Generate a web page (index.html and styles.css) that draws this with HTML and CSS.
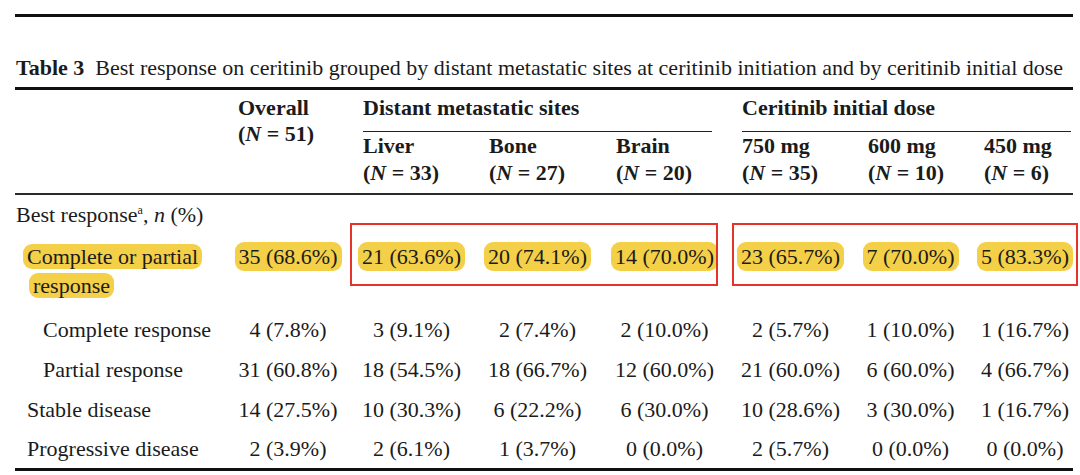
FILE: index.html
```
<!DOCTYPE html>
<html>
<head>
<meta charset="utf-8">
<link rel="stylesheet" href="styles.css">
</head>
<body>
<div class="page">
  <div class="rule thick"></div>
  <p class="caption"><b>Table 3</b>&nbsp; Best response on ceritinib grouped by distant metastatic sites at ceritinib initiation and by ceritinib initial dose</p>
  <div class="rule thick rule-caption"></div>

  <div class="thead">
    <div class="h overall">Overall<br>(<i>N</i> = 51)</div>
    <div class="h group g-sites">Distant metastatic sites</div>
    <div class="h group g-dose">Ceritinib initial dose</div>
    <div class="h sub c3">Liver<br>(<i>N</i> = 33)</div>
    <div class="h sub c4">Bone<br>(<i>N</i> = 27)</div>
    <div class="h sub c5">Brain<br>(<i>N</i> = 20)</div>
    <div class="h sub c6">750 mg<br>(<i>N</i> = 35)</div>
    <div class="h sub c7">600 mg<br>(<i>N</i> = 10)</div>
    <div class="h sub c8">450 mg<br>(<i>N</i> = 6)</div>
  </div>
  <div class="rule thin"></div>

  <div class="tbody">
    <div class="row">
      <div class="label lvl0">Best response<sup>a</sup>, <i>n</i> (%)</div>
    </div>
    <div class="row row-hl">
      <div class="label lvl-hl"><span class="mark">Complete or partial response</span></div>
      <div class="num"><span class="mark">35 (68.6%)</span></div>
      <div class="num"><span class="mark">21 (63.6%)</span></div>
      <div class="num"><span class="mark">20 (74.1%)</span></div>
      <div class="num"><span class="mark">14 (70.0%)</span></div>
      <div class="num"><span class="mark">23 (65.7%)</span></div>
      <div class="num"><span class="mark">7 (70.0%)</span></div>
      <div class="num"><span class="mark">5 (83.3%)</span></div>
      <div class="box box-sites"></div>
      <div class="box box-dose"></div>
    </div>
    <div class="row">
      <div class="label lvl2">Complete response</div>
      <div class="num">4 (7.8%)</div>
      <div class="num">3 (9.1%)</div>
      <div class="num">2 (7.4%)</div>
      <div class="num">2 (10.0%)</div>
      <div class="num">2 (5.7%)</div>
      <div class="num">1 (10.0%)</div>
      <div class="num">1 (16.7%)</div>
    </div>
    <div class="row">
      <div class="label lvl2">Partial response</div>
      <div class="num">31 (60.8%)</div>
      <div class="num">18 (54.5%)</div>
      <div class="num">18 (66.7%)</div>
      <div class="num">12 (60.0%)</div>
      <div class="num">21 (60.0%)</div>
      <div class="num">6 (60.0%)</div>
      <div class="num">4 (66.7%)</div>
    </div>
    <div class="row">
      <div class="label lvl1">Stable disease</div>
      <div class="num">14 (27.5%)</div>
      <div class="num">10 (30.3%)</div>
      <div class="num">6 (22.2%)</div>
      <div class="num">6 (30.0%)</div>
      <div class="num">10 (28.6%)</div>
      <div class="num">3 (30.0%)</div>
      <div class="num">1 (16.7%)</div>
    </div>
    <div class="row row-last">
      <div class="label lvl1">Progressive disease</div>
      <div class="num">2 (3.9%)</div>
      <div class="num">2 (6.1%)</div>
      <div class="num">1 (3.7%)</div>
      <div class="num">0 (0.0%)</div>
      <div class="num">2 (5.7%)</div>
      <div class="num">0 (0.0%)</div>
      <div class="num">0 (0.0%)</div>
    </div>
  </div>
  <div class="rule thick"></div>
</div>
</body>
</html>
```

FILE: styles.css
```
html, body {
  margin: 0;
  padding: 0;
  background: #ffffff;
}

body {
  font-family: "Liberation Serif", "Times New Roman", serif;
  font-size: 22px;
  color: #1b1b1b;
}

.page {
  width: 1058px;
  margin-left: 15px;
  padding-top: 14px;
}

.rule {
  background: #111111;
}

.rule.thick {
  height: 3px;
}

.rule.thin {
  height: 2px;
  background: #2a2a2a;
}

.caption {
  margin: 36px 0 4px 1px;
  line-height: 30px;
  white-space: nowrap;
}

.caption b {
  font-weight: bold;
}

/* shared column grid */
.thead,
.row {
  display: grid;
  grid-template-columns: 223px 125px 126px 127px 126px 126px 116px 89px;
}

/* header */
.thead {
  padding-top: 5px;
  padding-bottom: 7px;
  font-weight: bold;
}

.h {
  text-align: left;
}

.overall {
  grid-column: 2;
  grid-row: 1 / span 2;
  line-height: 26px;
}

.group {
  grid-row: 1;
  line-height: 26px;
  padding-bottom: 10px;
  border-bottom: 1.5px solid #222222;
  white-space: nowrap;
}

.g-sites {
  grid-column: 3 / span 3;
  margin-right: 30px;
}

.g-dose {
  grid-column: 6 / span 3;
  margin-right: 2px;
}

.sub {
  grid-row: 2;
  line-height: 27px;
  white-space: nowrap;
}

.c3 { grid-column: 3; }
.c4 { grid-column: 4; }
.c5 { grid-column: 5; }
.c6 { grid-column: 6; }
.c7 { grid-column: 7; }
.c8 { grid-column: 8; }

/* body */
.row {
  position: relative;
  line-height: 40px;
}

.row-last {
  line-height: 38px;
}

.label {
  grid-column: 1;
  white-space: nowrap;
}

.lvl0 { padding-left: 1px; }
.lvl1 { padding-left: 12px; }
.lvl2 { padding-left: 28px; }

.lvl-hl {
  white-space: normal;
  padding-left: 14px;
  text-indent: -6px;
  line-height: 29px;
}

.row-hl {
  padding-top: 7px;
  padding-bottom: 10px;
}

.row-hl .num {
  line-height: 29px;
  align-items: flex-start;
}

.num {
  display: flex;
  justify-content: center;
  white-space: nowrap;
}

.row > .num:nth-child(2) { padding-right: 25px; }
.row > .num:nth-child(3) { padding-right: 29px; }
.row > .num:nth-child(4) { padding-right: 30px; }
.row > .num:nth-child(5) { padding-right: 29px; }
.row > .num:nth-child(6) { padding-right: 29px; }
.row > .num:nth-child(7) { padding-right: 31px; }
.row > .num:nth-child(8) { padding-right: 7px; }

sup {
  font-size: 12px;
  line-height: 0;
  vertical-align: 8px;
}

.mark {
  background: #f4cf48;
  border-radius: 9px;
  padding: 0 4px;
  -webkit-box-decoration-break: clone;
  box-decoration-break: clone;
}

.box {
  position: absolute;
  top: -12px;
  height: 63px;
  border: 2px solid #e5332a;
  box-sizing: border-box;
}

.box-sites {
  left: 335px;
  width: 368px;
}

.box-dose {
  left: 717px;
  width: 346px;
}
```
